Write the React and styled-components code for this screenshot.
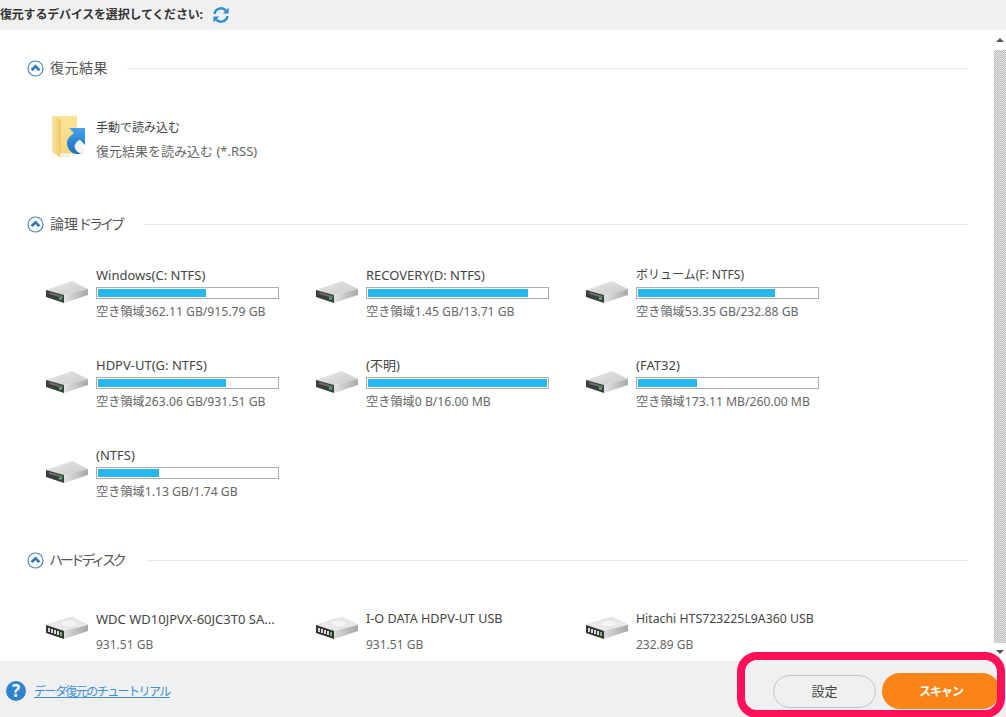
import React from 'react';
import styled, { createGlobalStyle } from 'styled-components';

const GlobalStyle = createGlobalStyle`
  html, body {
    margin: 0;
    padding: 0;
    background: #fff;
  }
  body {
    font-family: 'Noto Sans', 'Noto Sans CJK JP', sans-serif;
    font-size: 12px;
    color: #444;
  }
  * {
    box-sizing: border-box;
  }
`;

const Page = styled.div`
  position: relative;
  width: 1006px;
  height: 717px;
  overflow: hidden;
  display: flex;
  flex-direction: column;
`;

const Header = styled.div`
  height: 30px;
  flex: none;
  background: #f0f0f0;
  display: flex;
  align-items: center;
  gap: 9px;
`;

const HeaderTitle = styled.span`
  font-size: 12px;
  font-weight: 700;
  letter-spacing: -0.2px;
  color: #333;
  line-height: 1;
`;

const Body = styled.div`
  flex: 1;
  min-height: 0;
  display: flex;
`;

const Content = styled.div`
  flex: 1;
  overflow: hidden;
  padding: 28px 27px 0 27px;
`;

const Section = styled.section`
  height: ${(p) => p.$height}px;
`;

const SectionHead = styled.div`
  display: flex;
  align-items: center;
  height: 20px;
`;

const SectionTitle = styled.span`
  margin-left: ${(p) => p.$left}px;
  margin-right: ${(p) => p.$gap}px;
  font-size: 14px;
  line-height: 18px;
  margin-top: -1px;
  letter-spacing: ${(p) => p.$spacing}px;
  color: #555;
  white-space: nowrap;
`;

const Kana = styled.span`
  letter-spacing: -3px;
`;

const SectionLine = styled.div`
  flex: 1;
  height: 1px;
  background: #e6e6e6;
`;

const ManualItem = styled.div`
  display: flex;
  margin: 37px 0 0 24px;
`;

const ManualText = styled.div`
  margin-left: 9px;
  padding-top: 5px;
  display: flex;
  flex-direction: column;
  gap: 7px;
`;

const Name = styled.div`
  height: 16px;
  line-height: 16px;
  font-size: ${(p) => p.$size || 13}px;
  color: #444;
  white-space: nowrap;
`;

const Sub = styled.div`
  height: 16px;
  line-height: 16px;
  font-size: ${(p) => p.$size || 12}px;
  color: #666;
  white-space: nowrap;
`;

const FreeSpace = styled(Sub)`
  margin-top: 1px;
  font-size: 12.2px;
`;

const DriveGrid = styled.div`
  display: grid;
  grid-template-columns: repeat(3, 270px);
  grid-auto-rows: 90px;
  margin: ${(p) => p.$top}px 0 0 19px;
`;

const Drive = styled.div`
  display: flex;
  align-items: flex-start;
`;

const DriveIconWrap = styled.div`
  width: 50px;
  flex: none;
  padding-top: ${(p) => p.$top}px;
  margin-left: -1px;
  margin-right: 1px;
`;

const DriveInfo = styled.div`
  width: 183px;
  display: flex;
  flex-direction: column;
  gap: ${(p) => p.$gap}px;
`;

const Bar = styled.div`
  height: 12px;
  border: 1px solid #adadad;
  padding: 1px;
  background: #fff;
`;

const BarFill = styled.div`
  height: 100%;
  background: #25b7ee;
`;

const Scrollbar = styled.div`
  width: 12px;
  flex: none;
  display: flex;
  flex-direction: column;
  align-items: center;
  padding-top: 8px;
`;

const ScrollThumb = styled.div`
  width: 12px;
  height: 593px;
  margin: 8px 0 7px;
  background: repeating-conic-gradient(#bdbdbd 0% 25%, #e4e4e4 0% 50%) 0 0 / 2px 2px;
`;

const Arrow = styled.div`
  width: 0;
  height: 0;
  border-left: 4px solid transparent;
  border-right: 4px solid transparent;
  ${(p) => (p.$down ? 'border-top: 4px solid #555;' : 'border-bottom: 4px solid #555;')}
`;

const Footer = styled.div`
  height: 56px;
  flex: none;
  background: #f0f0f0;
  display: flex;
  align-items: center;
  padding: 4px 0 0 6px;
`;

const HelpBadge = styled.div`
  width: 20px;
  height: 20px;
  border-radius: 50%;
  background: #2c85cc;
  color: #fff;
  font-size: 17px;
  font-weight: 700;
  line-height: 20px;
  text-align: center;
  margin-right: 8px;
`;

const TutorialLink = styled.a`
  font-size: 12px;
  letter-spacing: -1.55px;
  color: #3d8fd8;
  text-decoration: underline;
`;

const FooterButtons = styled.div`
  margin-left: auto;
  display: flex;
  align-items: center;
  gap: 6px;
  margin-right: 6px;
`;

const SettingsButton = styled.button`
  width: 103px;
  height: 33px;
  border: 1px solid #c4c4c4;
  border-radius: 17px;
  background: #f0f0f0;
  color: #444;
  font: inherit;
  font-size: 13px;
  padding: 0 0 2px;
`;

const ScanButton = styled.button`
  width: 118px;
  height: 36px;
  border: 0;
  border-radius: 18px;
  background: #fb8418;
  color: #fff;
  font: inherit;
  font-size: 12px;
  font-weight: 700;
  letter-spacing: -1px;
  padding: 0;
`;

const Highlight = styled.div`
  position: absolute;
  left: 737px;
  top: 652px;
  width: 268px;
  height: 66px;
  border: 8px solid #ff1059;
  border-radius: 20px;
  pointer-events: none;
`;

const RefreshIcon = () => (
  <svg width="18" height="18" viewBox="0 0 18 18" fill="none">
    <path d="M2.5 8A6.6 6.6 0 0 1 14 4.6" stroke="#2d8fd5" strokeWidth="2.4" />
    <path d="M15.5 10A6.6 6.6 0 0 1 4 13.4" stroke="#2d8fd5" strokeWidth="2.4" />
    <path d="M16.6 1.4V7.4H10.8Z" fill="#2d8fd5" />
    <path d="M1.4 16.6V10.6H7.2Z" fill="#2d8fd5" />
  </svg>
);

const CollapseIcon = () => (
  <svg width="17" height="17" viewBox="0 0 17 17" fill="none">
    <circle cx="8.5" cy="8.5" r="7.5" stroke="#4c87bf" strokeWidth="1.2" fill="#fff" />
    <path d="M4.6 10.2 8.5 6.4 12.4 10.2" stroke="#2f78bb" strokeWidth="2.6" />
  </svg>
);

const FolderIcon = () => (
  <svg width="36" height="44" viewBox="0 0 36 44" style={{ display: 'block' }}>
    <defs>
      <linearGradient id="folderBack" x1="0" y1="0" x2="0" y2="1">
        <stop offset="0" stopColor="#fbe49a" />
        <stop offset="1" stopColor="#f5d67e" />
      </linearGradient>
      <linearGradient id="folderFront" x1="0" y1="0" x2="1" y2="0">
        <stop offset="0" stopColor="#fbe7a6" />
        <stop offset="1" stopColor="#eec766" />
      </linearGradient>
      <linearGradient id="arrowBlue" x1="0" y1="0" x2="0" y2="1">
        <stop offset="0" stopColor="#45a2ee" />
        <stop offset="1" stopColor="#1c6fbb" />
      </linearGradient>
    </defs>
    <path d="M1 1H26V38L9 40 1 36Z" fill="url(#folderBack)" />
    <path d="M1 1 10 5V43L1 37Z" fill="url(#folderFront)" />
    <path d="M10 5 26 3V4L10 7Z" fill="#f7dc8d" />
    <path d="M9 42H19V38H9Z" fill="#f6efd9" />
    <path
      d="M18 13H34V30L29 25C25 27 23 30 24 33 25 36 28 38 31 39H26C20 39 16 33 16 28 16 24 19 21 23 18Z"
      fill="url(#arrowBlue)"
    />
    <path d="M24 33C25 36 28 38 31 39H33C34 36 33 31 29 25 25 27 23 30 24 33Z" fill="#f4f4f4" />
  </svg>
);

const VolumeIcon = () => (
  <svg width="44" height="24" viewBox="0 0 44 24" style={{ display: 'block' }}>
    <defs>
      <linearGradient id="volTop" x1="0" y1="0" x2="1" y2="1">
        <stop offset="0" stopColor="#e9e9e9" />
        <stop offset="1" stopColor="#c9c9c9" />
      </linearGradient>
      <linearGradient id="volFront" x1="0" y1="0" x2="1" y2="0">
        <stop offset="0" stopColor="#e2e2e2" />
        <stop offset="1" stopColor="#a9a9a9" />
      </linearGradient>
    </defs>
    <path d="M1 10 27 1 43 9 19 15Z" fill="url(#volTop)" />
    <path d="M19 15 43 9V15L19 23Z" fill="url(#volFront)" />
    <path d="M1 10 19 15V23L1 17Z" fill="#3d3d3d" />
    <path d="M4 12 18 16V18L4 14Z" fill="#6e6e6e" />
    <rect x="14" y="17.5" width="3" height="2" fill="#3fd35f" />
  </svg>
);

const DiskIcon = () => (
  <svg width="44" height="24" viewBox="0 0 44 24" style={{ display: 'block' }}>
    <defs>
      <linearGradient id="diskFront" x1="0" y1="0" x2="1" y2="0">
        <stop offset="0" stopColor="#dcdcdc" />
        <stop offset="1" stopColor="#a5a5a5" />
      </linearGradient>
    </defs>
    <path d="M1 9 27 1 43 9 19 15Z" fill="#e9e9e9" stroke="#d2d2d2" strokeWidth="0.5" />
    <ellipse cx="24" cy="7.5" rx="8" ry="3.6" fill="#f4f4f4" stroke="#d6d6d6" strokeWidth="0.6" />
    <path d="M19 15 43 9V15L19 23Z" fill="url(#diskFront)" />
    <path d="M1 9 19 15V23L1 17Z" fill="#333" />
    <path d="M4 12V16M7 13V17M10 14V18" stroke="#e8e8e8" strokeWidth="1.8" />
    <path d="M13 15V19" stroke="#e8e8e8" strokeWidth="1.8" />
    <path d="M16 16V20" stroke="#5ed06a" strokeWidth="1.8" />
  </svg>
);

const volumes = [
  { name: 'Windows(C: NTFS)', free: '空き領域362.11 GB/915.79 GB', used: 60.5 },
  { name: 'RECOVERY(D: NTFS)', free: '空き領域1.45 GB/13.71 GB', used: 89.5 },
  { name: 'ボリューム(F: NTFS)', nameSize: 12, free: '空き領域53.35 GB/232.88 GB', used: 76.5 },
  { name: 'HDPV-UT(G: NTFS)', free: '空き領域263.06 GB/931.51 GB', used: 71.5 },
  { name: '(不明)', free: '空き領域0 B/16.00 MB', used: 100 },
  { name: '(FAT32)', free: '空き領域173.11 MB/260.00 MB', used: 33 },
  { name: '(NTFS)', free: '空き領域1.13 GB/1.74 GB', used: 34 },
];

const disks = [
  { name: 'WDC WD10JPVX-60JC3T0 SA...', size: '931.51 GB' },
  { name: 'I-O DATA HDPV-UT USB', nameSize: 12.6, size: '931.51 GB' },
  { name: 'Hitachi HTS723225L9A360 USB', nameSize: 12.3, size: '232.89 GB' },
];

const App = () => {
  return (
    <Page>
      <GlobalStyle />
      <Header>
        <HeaderTitle>復元するデバイスを選択してください:</HeaderTitle>
        <RefreshIcon />
      </Header>
      <Body>
        <Content>
          <Section $height={156}>
            <SectionHead>
              <CollapseIcon />
              <SectionTitle $left={6} $gap={19} $spacing={0.5}>復元結果</SectionTitle>
              <SectionLine />
            </SectionHead>
            <ManualItem>
              <FolderIcon />
              <ManualText>
                <Name $size={12}>手動で読み込む</Name>
                <Sub $size={13}>復元結果を読み込む (*.RSS)</Sub>
              </ManualText>
            </ManualItem>
          </Section>
          <Section $height={336}>
            <SectionHead>
              <CollapseIcon />
              <SectionTitle $left={6} $gap={23} $spacing={0}>論理<Kana>ドライブ</Kana></SectionTitle>
              <SectionLine />
            </SectionHead>
            <DriveGrid $top={33}>
              {volumes.map((v) => (
                <Drive key={v.name}>
                  <DriveIconWrap $top={13}>
                    <VolumeIcon />
                  </DriveIconWrap>
                  <DriveInfo $gap={4}>
                    <Name $size={v.nameSize}>{v.name}</Name>
                    <Bar>
                      <BarFill style={{ width: `${v.used}%` }} />
                    </Bar>
                    <FreeSpace>{v.free}</FreeSpace>
                  </DriveInfo>
                </Drive>
              ))}
            </DriveGrid>
          </Section>
          <Section $height={110}>
            <SectionHead>
              <CollapseIcon />
              <SectionTitle $left={5} $gap={23} $spacing={-3.2}>ハードディスク</SectionTitle>
              <SectionLine />
            </SectionHead>
            <DriveGrid $top={41}>
              {disks.map((d) => (
                <Drive key={d.name}>
                  <DriveIconWrap $top={5}>
                    <DiskIcon />
                  </DriveIconWrap>
                  <DriveInfo $gap={10}>
                    <Name $size={d.nameSize}>{d.name}</Name>
                    <Sub>{d.size}</Sub>
                  </DriveInfo>
                </Drive>
              ))}
            </DriveGrid>
          </Section>
        </Content>
        <Scrollbar>
          <Arrow />
          <ScrollThumb />
          <Arrow $down />
        </Scrollbar>
      </Body>
      <Footer>
        <HelpBadge>?</HelpBadge>
        <TutorialLink>データ復元のチュートリアル</TutorialLink>
        <FooterButtons>
          <SettingsButton>設定</SettingsButton>
          <ScanButton>スキャン</ScanButton>
        </FooterButtons>
      </Footer>
      <Highlight />
    </Page>
  );
};

export default App;
